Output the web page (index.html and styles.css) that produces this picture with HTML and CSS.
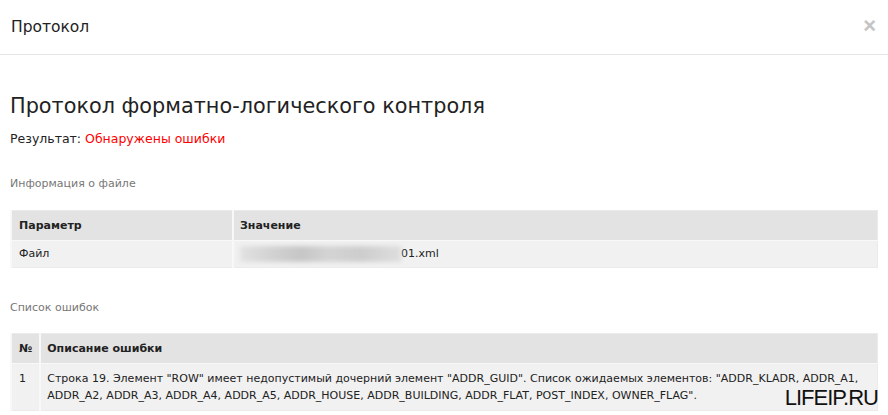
FILE: index.html
```html
<!DOCTYPE html>
<html lang="ru">
<head>
    <meta charset="UTF-8">
    <title>Протокол</title>
    <link rel="stylesheet" href="styles.css">
</head>
<body>
    <div class="modal">
        <div class="modal-header">
            <span class="modal-title">Протокол</span>
            <span class="close">&times;</span>
        </div>

        <div class="modal-body">
            <h1>Протокол форматно-логического контроля</h1>
            <p class="result">Результат: <span class="error">Обнаружены ошибки</span></p>

            <!-- Информация о файле -->
            <p class="section">Информация о файле</p>
            <table class="grid">
                <tr>
                    <th class="col-param">Параметр</th>
                    <th>Значение</th>
                </tr>
                <tr>
                    <td>Файл</td>
                    <td><span class="blur"></span>01.xml</td>
                </tr>
            </table>

            <!-- Список ошибок -->
            <p class="section section-errors">Список ошибок</p>
            <table class="grid errors">
                <tr>
                    <th class="col-num">№</th>
                    <th>Описание ошибки</th>
                </tr>
                <tr>
                    <td>1</td>
                    <td>Строка 19. Элемент "ROW" имеет недопустимый дочерний элемент "ADDR_GUID". Список ожидаемых элементов: "ADDR_KLADR, ADDR_A1, ADDR_A2, ADDR_A3, ADDR_A4, ADDR_A5, ADDR_HOUSE, ADDR_BUILDING, ADDR_FLAT, POST_INDEX, OWNER_FLAG".</td>
                </tr>
            </table>
        </div>

        <span class="watermark">LIFEIP.RU</span>
    </div>
</body>
</html>
```

FILE: styles.css
```css
* {
    margin: 0;
    padding: 0;
    box-sizing: border-box;
}

body {
    font-family: 'DejaVu Sans', Verdana, sans-serif;
    background-color: #fff;
    color: #333;
}

.modal {
    position: relative;
    width: 888px;
    height: 415px;
    overflow: hidden;
}

.modal-header {
    height: 55px;
    padding: 0 11px;
    border-bottom: 1px solid #e5e5e5;
    display: flex;
    align-items: center;
    justify-content: space-between;
}

.modal-title {
    font-size: 15.5px;
    color: #222;
    padding-bottom: 1px;
}

.close {
    font-family: 'Liberation Sans', Arial, sans-serif;
    font-size: 22px;
    font-weight: bold;
    color: #c4c4c4;
    margin-right: 1px;
    margin-bottom: 3px;
}

.modal-body {
    padding: 37px 10px 0 10px;
}

h1 {
    font-size: 20.8px;
    font-weight: normal;
    color: #222;
    line-height: 28px;
}

.result {
    font-size: 12.5px;
    margin-top: 11px;
    color: #222;
}

.error {
    color: #ff0000;
}

.section {
    font-size: 11px;
    color: #777;
    margin-top: 31px;
    margin-bottom: 20px;
}

.section-errors {
    margin-top: 33px;
    margin-bottom: 19px;
}

.grid {
    width: 868px;
    border-collapse: collapse;
    border: 1px solid #ebebeb;
    font-size: 11px;
    color: #222;
}

.grid th,
.grid td {
    text-align: left;
    vertical-align: top;
    padding: 7px 7px 6px 6px;
    line-height: 16px;
    border-left: 2px solid #f8f8f8;
}

.grid th:first-child,
.grid td:first-child {
    padding-left: 7px;
}

.grid th {
    background-color: #e3e3e3;
    font-weight: bold;
    padding-top: 7px;
    padding-bottom: 6px;
    border-bottom: 1px solid #f8f8f8;
}

.grid td {
    background-color: #f1f1f1;
    padding-top: 5px;
    padding-bottom: 5px;
}

.errors td {
    line-height: 17px;
    padding-top: 6px;
    padding-bottom: 6px;
}

.col-param {
    width: 222px;
}

.col-num {
    width: 28px;
}

.blur {
    display: inline-block;
    width: 161px;
    height: 16px;
    vertical-align: top;
    background: linear-gradient(90deg, #e2e2e2 0%, #d2d2d2 20%, #c6c6c6 38%, #d4d4d4 55%, #cdcdcd 75%, #dedede 100%);
    filter: blur(2px);
}

.watermark {
    position: absolute;
    right: 10px;
    bottom: 4px;
    font-family: 'Liberation Sans', Arial, sans-serif;
    font-size: 22px;
    color: #111;
    letter-spacing: -1px;
}
```
